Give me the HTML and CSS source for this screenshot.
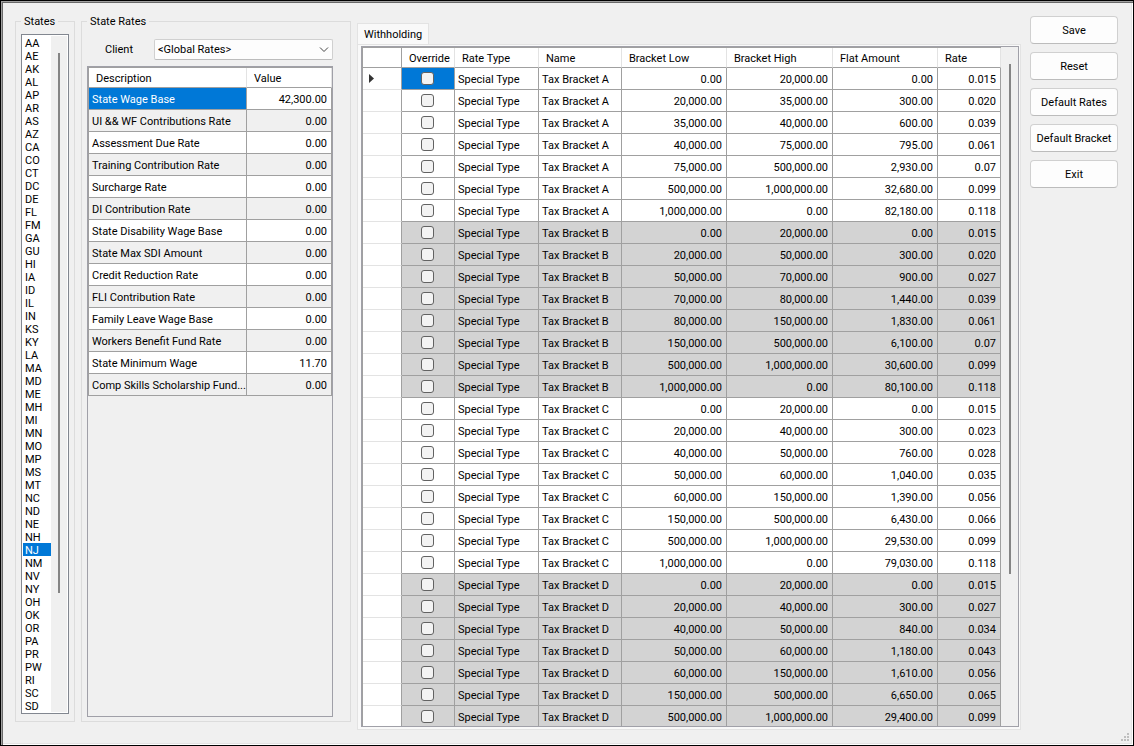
FILE: index.html
```html
<!DOCTYPE html>
<html lang="en">

<head>
    <meta charset="UTF-8">
    <meta name="viewport" content="width=device-width, initial-scale=1.0">
    <title>State Rates</title>
    <link rel="stylesheet" href="styles.css">
    <script defer src="main.js"></script>
</head>

<body>
    <main class="window">
        <!-- States -->
        <fieldset class="group states">
            <legend><label for="stateList">States</label></legend>
            <div class="list-frame">
                <select id="stateList" class="state-list" size="52"></select>
                <div class="list-scroll"><div class="thumb"></div></div>
            </div>
        </fieldset>

        <!-- State Rates -->
        <fieldset class="group rates">
            <legend>State Rates</legend>
            <div class="client-row">
                <label for="client">Client</label>
                <div class="combo">
                    <select id="client">
                        <option>&lt;Global Rates&gt;</option>
                    </select>
                    <svg class="chevron" width="10" height="6" viewBox="0 0 10 6">
                        <path d="M1 0.5 L5 4.5 L9 0.5" fill="none" stroke="#444" />
                    </svg>
                </div>
            </div>
            <div class="grid-frame rates-frame">
                <table class="grid rates-grid">
                    <colgroup>
                        <col class="col-description">
                        <col class="col-value">
                    </colgroup>
                    <thead>
                        <tr>
                            <th>Description</th>
                            <th>Value</th>
                        </tr>
                    </thead>
                    <tbody id="rateRows"></tbody>
                </table>
            </div>
        </fieldset>

        <!-- Withholding -->
        <section class="withholding">
            <button type="button" class="tab">Withholding</button>
            <div class="tab-page">
                <div class="grid-frame bracket-frame">
                    <table class="grid bracket-grid">
                        <colgroup>
                            <col class="col-marker">
                            <col class="col-override">
                            <col class="col-type">
                            <col class="col-name">
                            <col class="col-low">
                            <col class="col-high">
                            <col class="col-flat">
                            <col class="col-rate">
                        </colgroup>
                        <thead>
                            <tr>
                                <th class="marker"></th>
                                <th>Override</th>
                                <th>Rate Type</th>
                                <th>Name</th>
                                <th>Bracket Low</th>
                                <th>Bracket High</th>
                                <th>Flat Amount</th>
                                <th>Rate</th>
                            </tr>
                        </thead>
                        <tbody id="bracketRows"></tbody>
                    </table>
                    <div class="grid-scroll"><div class="thumb"></div></div>
                </div>
            </div>
        </section>

        <!-- Actions -->
        <div class="actions">
            <button type="button">Save</button>
            <button type="button">Reset</button>
            <button type="button">Default Rates</button>
            <button type="button">Default Bracket</button>
            <button type="button">Exit</button>
        </div>

        <svg class="grip" width="8" height="8" viewBox="0 0 8 8" fill="#bfbfbf">
            <path d="M6 0h2v2h-2zM3 3h2v2h-2zM6 3h2v2h-2zM0 6h2v2h-2zM3 6h2v2h-2zM6 6h2v2h-2z" />
        </svg>
    </main>
</body>

</html>
```
FILE: styles.css
```css
* {
    box-sizing: border-box;
}

body {
    margin: 0;
    font-family: Roboto, "Liberation Sans", Arial, sans-serif;
    font-size: 11px;
    line-height: 13px;
    color: #000;
    background-color: #f0f0f0;
}

button,
select,
input {
    font: inherit;
    color: inherit;
    margin: 0;
}

/* Window */
.window {
    position: relative;
    display: flex;
    gap: 6px;
    height: 100vh;
    min-height: 480px;
    padding: 12px 13px 13px 12px;
    border: 1px solid #000;
    box-shadow: inset 1px 1px #a0a0a0, inset 2px 2px #696969, inset -1px -1px #fff, inset -2px -2px #e3e3e3;
}

.grip {
    position: absolute;
    right: 4px;
    bottom: 4px;
}

/* Group boxes */
.group {
    display: flex;
    flex-direction: column;
    flex: none;
    min-width: 0;
    margin: 2px 0 10px;
    border: 1px solid #dcdcdc;
}

.group legend {
    padding: 0 3px;
}

.states {
    width: 60px;
    margin-left: 2px;
    padding: 6px 5px 7px;
}

.rates {
    width: 270px;
    padding: 11px 17px 4px 5px;
}

/* State list */
.list-frame {
    display: flex;
    flex: 1;
    min-height: 0;
    padding: 1px;
    border: 1px solid #828790;
    background-color: #fff;
}

.state-list {
    flex: 1;
    min-width: 0;
    padding: 0;
    border: none;
    border-radius: 0;
    outline: none;
    background-color: #fff;
    overflow: hidden;
}

.state-list option {
    height: 13px;
    min-height: 13px;
    padding: 1px 2px 0;
}

.state-list option:checked {
    background: #0078d7 linear-gradient(#0078d7, #0078d7);
    color: #fff;
    -webkit-text-fill-color: #fff;
}

.list-scroll {
    width: 16px;
    padding: 17px 7px 0;
    background-color: #f0f0f0;
}

.thumb {
    width: 2px;
    background-color: #858585;
}

.list-scroll .thumb {
    height: 82%;
}

/* Client */
.client-row {
    display: flex;
    align-items: center;
    justify-content: space-between;
    padding-left: 18px;
    margin-bottom: 6px;
}

.combo {
    position: relative;
    width: 179px;
}

.combo select {
    display: block;
    width: 100%;
    height: 21px;
    padding: 0 3px;
    border: 1px solid #d0d0d0;
    border-bottom-color: #bcbcbc;
    border-radius: 2px;
    background-color: #fdfdfd;
    appearance: none;
}

.chevron {
    position: absolute;
    top: 8px;
    right: 4px;
    pointer-events: none;
}

/* Grids */
.grid-frame {
    flex: 1;
    min-height: 0;
    overflow: hidden;
    border: 1px solid #a0a0a8;
}

.grid {
    flex: none;
    table-layout: fixed;
    border-collapse: separate;
    border-spacing: 0;
    border-top: 1px solid #a0a0a0;
    border-left: 1px solid #a0a0a0;
}

.grid th,
.grid td {
    height: 22px;
    padding: 1px 0 0 3px;
    border-right: 1px solid #a0a0a0;
    border-bottom: 1px solid #a0a0a0;
    background-color: #fff;
    text-align: left;
    white-space: nowrap;
    overflow: hidden;
    text-overflow: ellipsis;
}

.grid th {
    height: 20px;
    padding: 1px 4px 0 7px;
    border-right-color: #e3e3e3;
    font-weight: normal;
}

.grid td.number {
    padding-right: 4px;
    text-align: right;
}

.grid .selected {
    background-color: #0078d7;
    color: #fff;
}

.rates-grid {
    width: 244px;
}

.rates-grid tr:nth-child(even) td {
    background-color: #f0f0f0;
}

.col-description {
    width: 158px;
}

.col-value {
    width: 85px;
}

/* Withholding */
.withholding {
    display: flex;
    flex-direction: column;
    flex: 1;
    min-width: 0;
    margin: 10px 0 2px;
}

.tab {
    align-self: flex-start;
    height: 21px;
    padding: 0 6px;
    border: 1px solid #e3e3e3;
    border-bottom: none;
    background-color: #f9f9f9;
}

.tab-page {
    display: flex;
    flex: 1;
    min-height: 0;
    padding: 1px 1px 2px 3px;
    border: 1px solid #e3e3e3;
    background-color: #f9f9f9;
}

.bracket-frame {
    display: flex;
    align-items: flex-start;
    background-color: #f0f0f0;
}

.bracket-grid {
    width: 639px;
}

.grid .marker {
    padding: 0 6px;
    border-bottom-color: #e3e3e3;
}

.grid th.marker {
    border-right-color: #a0a0a0;
    border-bottom-color: #a0a0a0;
}

.marker svg {
    display: block;
}

.bracket-grid .shaded td {
    background-color: #d3d3d3;
}

.bracket-grid .shaded td.marker {
    background-color: #fff;
}

.col-marker {
    width: 39px;
}

.col-override {
    width: 53px;
}

.col-type {
    width: 84px;
}

.col-name {
    width: 83px;
}

.col-low {
    width: 105px;
}

.col-high {
    width: 106px;
}

.col-flat {
    width: 105px;
}

.col-rate {
    width: 63px;
}

.grid td.override {
    padding: 0 4px 0 3px;
}

.override input {
    display: block;
    width: 13px;
    height: 13px;
    margin: 0 auto;
    border: 1px solid #626262;
    border-radius: 3px;
    background-color: #f3f3f3;
    appearance: none;
}

.override input:checked {
    background-color: #0078d7;
}

.grid-scroll {
    align-self: stretch;
    flex: 1;
    padding: 17px 8px 0;
}

.grid-scroll .thumb {
    height: 77%;
}

/* Actions */
.actions {
    display: flex;
    flex-direction: column;
    flex: none;
    gap: 8px;
    width: 91px;
    margin-right: 2px;
    padding: 3px 0 0 3px;
}

.actions button {
    height: 28px;
    padding: 0;
    border: 1px solid #d0d0d0;
    border-bottom-color: #bcbcbc;
    border-radius: 4px;
    background-color: #fdfdfd;
}

.actions button:hover {
    background-color: #e5f1fb;
}
```
FILE: main.js
```js
const states = 'AA AE AK AL AP AR AS AZ CA CO CT DC DE FL FM GA GU HI IA ID IL IN KS KY LA MA MD ME MH MI MN MO MP MS MT NC ND NE NH NJ NM NV NY OH OK OR PA PR PW RI SC SD'.split(' ');

const rates = [
    ['State Wage Base', '42,300.00'],
    ['UI && WF Contributions Rate', '0.00'],
    ['Assessment Due Rate', '0.00'],
    ['Training Contribution Rate', '0.00'],
    ['Surcharge Rate', '0.00'],
    ['DI Contribution Rate', '0.00'],
    ['State Disability Wage Base', '0.00'],
    ['State Max SDI Amount', '0.00'],
    ['Credit Reduction Rate', '0.00'],
    ['FLI Contribution Rate', '0.00'],
    ['Family Leave Wage Base', '0.00'],
    ['Workers Benefit Fund Rate', '0.00'],
    ['State Minimum Wage', '11.70'],
    ['Comp Skills Scholarship Fund...', '0.00']
];

// name, low, high, flat amount, rate
const brackets = [
    ['A', '0.00', '20,000.00', '0.00', '0.015'],
    ['A', '20,000.00', '35,000.00', '300.00', '0.020'],
    ['A', '35,000.00', '40,000.00', '600.00', '0.039'],
    ['A', '40,000.00', '75,000.00', '795.00', '0.061'],
    ['A', '75,000.00', '500,000.00', '2,930.00', '0.07'],
    ['A', '500,000.00', '1,000,000.00', '32,680.00', '0.099'],
    ['A', '1,000,000.00', '0.00', '82,180.00', '0.118'],
    ['B', '0.00', '20,000.00', '0.00', '0.015'],
    ['B', '20,000.00', '50,000.00', '300.00', '0.020'],
    ['B', '50,000.00', '70,000.00', '900.00', '0.027'],
    ['B', '70,000.00', '80,000.00', '1,440.00', '0.039'],
    ['B', '80,000.00', '150,000.00', '1,830.00', '0.061'],
    ['B', '150,000.00', '500,000.00', '6,100.00', '0.07'],
    ['B', '500,000.00', '1,000,000.00', '30,600.00', '0.099'],
    ['B', '1,000,000.00', '0.00', '80,100.00', '0.118'],
    ['C', '0.00', '20,000.00', '0.00', '0.015'],
    ['C', '20,000.00', '40,000.00', '300.00', '0.023'],
    ['C', '40,000.00', '50,000.00', '760.00', '0.028'],
    ['C', '50,000.00', '60,000.00', '1,040.00', '0.035'],
    ['C', '60,000.00', '150,000.00', '1,390.00', '0.056'],
    ['C', '150,000.00', '500,000.00', '6,430.00', '0.066'],
    ['C', '500,000.00', '1,000,000.00', '29,530.00', '0.099'],
    ['C', '1,000,000.00', '0.00', '79,030.00', '0.118'],
    ['D', '0.00', '20,000.00', '0.00', '0.015'],
    ['D', '20,000.00', '40,000.00', '300.00', '0.027'],
    ['D', '40,000.00', '50,000.00', '840.00', '0.034'],
    ['D', '50,000.00', '60,000.00', '1,180.00', '0.043'],
    ['D', '60,000.00', '150,000.00', '1,610.00', '0.056'],
    ['D', '150,000.00', '500,000.00', '6,650.00', '0.065'],
    ['D', '500,000.00', '1,000,000.00', '29,400.00', '0.099']
];

const arrow = '<svg width="5" height="9" viewBox="0 0 5 9"><path d="M0 0 L5 4.5 L0 9 Z" fill="#333" /></svg>';

function addCell(row, text, className) {
    const cell = row.insertCell();
    cell.textContent = text;
    if (className) cell.className = className;
    return cell;
}

// State list
const stateList = document.getElementById('stateList');
states.forEach(code => {
    stateList.add(new Option(code, code, code === 'NJ', code === 'NJ'));
});

// State rates
const rateRows = document.getElementById('rateRows');
rates.forEach(([description, value], index) => {
    const row = rateRows.insertRow();
    addCell(row, description, index === 0 ? 'selected' : '');
    addCell(row, value, 'number');
});

// Withholding brackets
const bracketRows = document.getElementById('bracketRows');
brackets.forEach(([name, ...numbers], index) => {
    const row = bracketRows.insertRow();
    if (name === 'B' || name === 'D') row.className = 'shaded';

    const marker = addCell(row, '', 'marker');
    if (index === 0) marker.innerHTML = arrow;

    const override = addCell(row, '', index === 0 ? 'override selected' : 'override');
    const box = document.createElement('input');
    box.type = 'checkbox';
    box.setAttribute('aria-label', `Override row ${index + 1}`);
    override.appendChild(box);

    addCell(row, 'Special Type');
    addCell(row, `Tax Bracket ${name}`);
    numbers.forEach(number => addCell(row, number, 'number'));
});
```
